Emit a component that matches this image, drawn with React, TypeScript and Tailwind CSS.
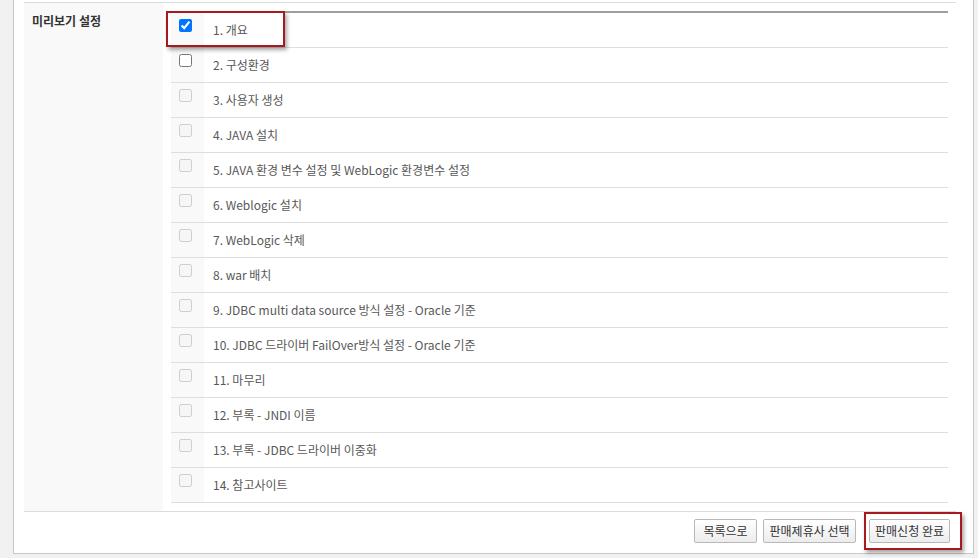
import React from "react";

const items = [
  "1. 개요",
  "2. 구성환경",
  "3. 사용자 생성",
  "4. JAVA 설치",
  "5. JAVA 환경 변수 설정 및 WebLogic 환경변수 설정",
  "6. Weblogic 설치",
  "7. WebLogic 삭제",
  "8. war 배치",
  "9. JDBC multi data source 방식 설정 - Oracle 기준",
  "10. JDBC 드라이버 FailOver방식 설정 - Oracle 기준",
  "11. 마무리",
  "12. 부록 - JNDI 이름",
  "13. 부록 - JDBC 드라이버 이중화",
  "14. 참고사이트",
];

function Btn({ label, width, highlight }: { label: string; width: string; highlight?: boolean }) {
  return (
    <div className="relative">
      <button
        className={`${width} h-[24px] px-0 border border-[#b8b8b8] rounded-[2px] bg-gradient-to-b from-white to-[#ececec] text-[12px] text-[#333] leading-none whitespace-nowrap`}
      >
        {label}
      </button>
      {highlight && (
        <div className="absolute -left-[5px] -top-[5px] -right-[12px] -bottom-[7px] border-2 border-[#a8181c] shadow-[2px_3px_4px_rgba(0,0,0,0.35)] pointer-events-none" />
      )}
    </div>
  );
}

export default function App() {
  return (
    <div
      className="w-[978px] h-[558px] bg-[#f1f1f1] pl-[13px] pr-[4px] overflow-hidden"
      style={{ fontFamily: '"Noto Sans CJK KR", "Noto Sans", sans-serif' }}
    >
      <div className="bg-white border-x border-b border-[#c8c8c8] pt-[2px] pl-[10px] pr-[17px]">
        {/* settings table */}
        <div className="flex border-y border-[#dcdcdc]">
          <div className="w-[139px] bg-[#f9f9f9] pl-[8px] pt-[9px] text-[12px] font-bold text-[#333]">
            미리보기 설정
          </div>
          <div className="flex-1 p-[8px]">
            <div className="relative border-t-2 border-[#9e9e9e]">
              {items.map((t, i) => (
                <div key={i} className="flex h-[35px] border-b border-[#dedede]">
                  <div className="w-[33px] bg-[#f9f9f9] pl-[8px] pt-[6px]">
                    <input
                      type="checkbox"
                      className="w-[13px] h-[13px] m-0 block"
                      defaultChecked={i === 0}
                      disabled={i > 1}
                    />
                  </div>
                  <div className="flex-1 flex items-center pl-[9px] text-[12px] text-[#585858]">{t}</div>
                </div>
              ))}
              <div className="absolute -left-[5px] -top-[2px] w-[119px] h-[36px] border-2 border-[#a8181c] shadow-[2px_3px_4px_rgba(0,0,0,0.35)] pointer-events-none" />
            </div>
          </div>
        </div>

        {/* buttons */}
        <div className="flex justify-end pt-[5px] pb-[10px] pr-[6px]">
          <Btn label="목록으로" width="w-[63px]" />
          <div className="w-[6px]" />
          <Btn label="판매제휴사 선택" width="w-[93px]" />
          <div className="w-[13px]" />
          <Btn label="판매신청 완료" width="w-[81px]" highlight />
        </div>
      </div>
    </div>
  );
}
